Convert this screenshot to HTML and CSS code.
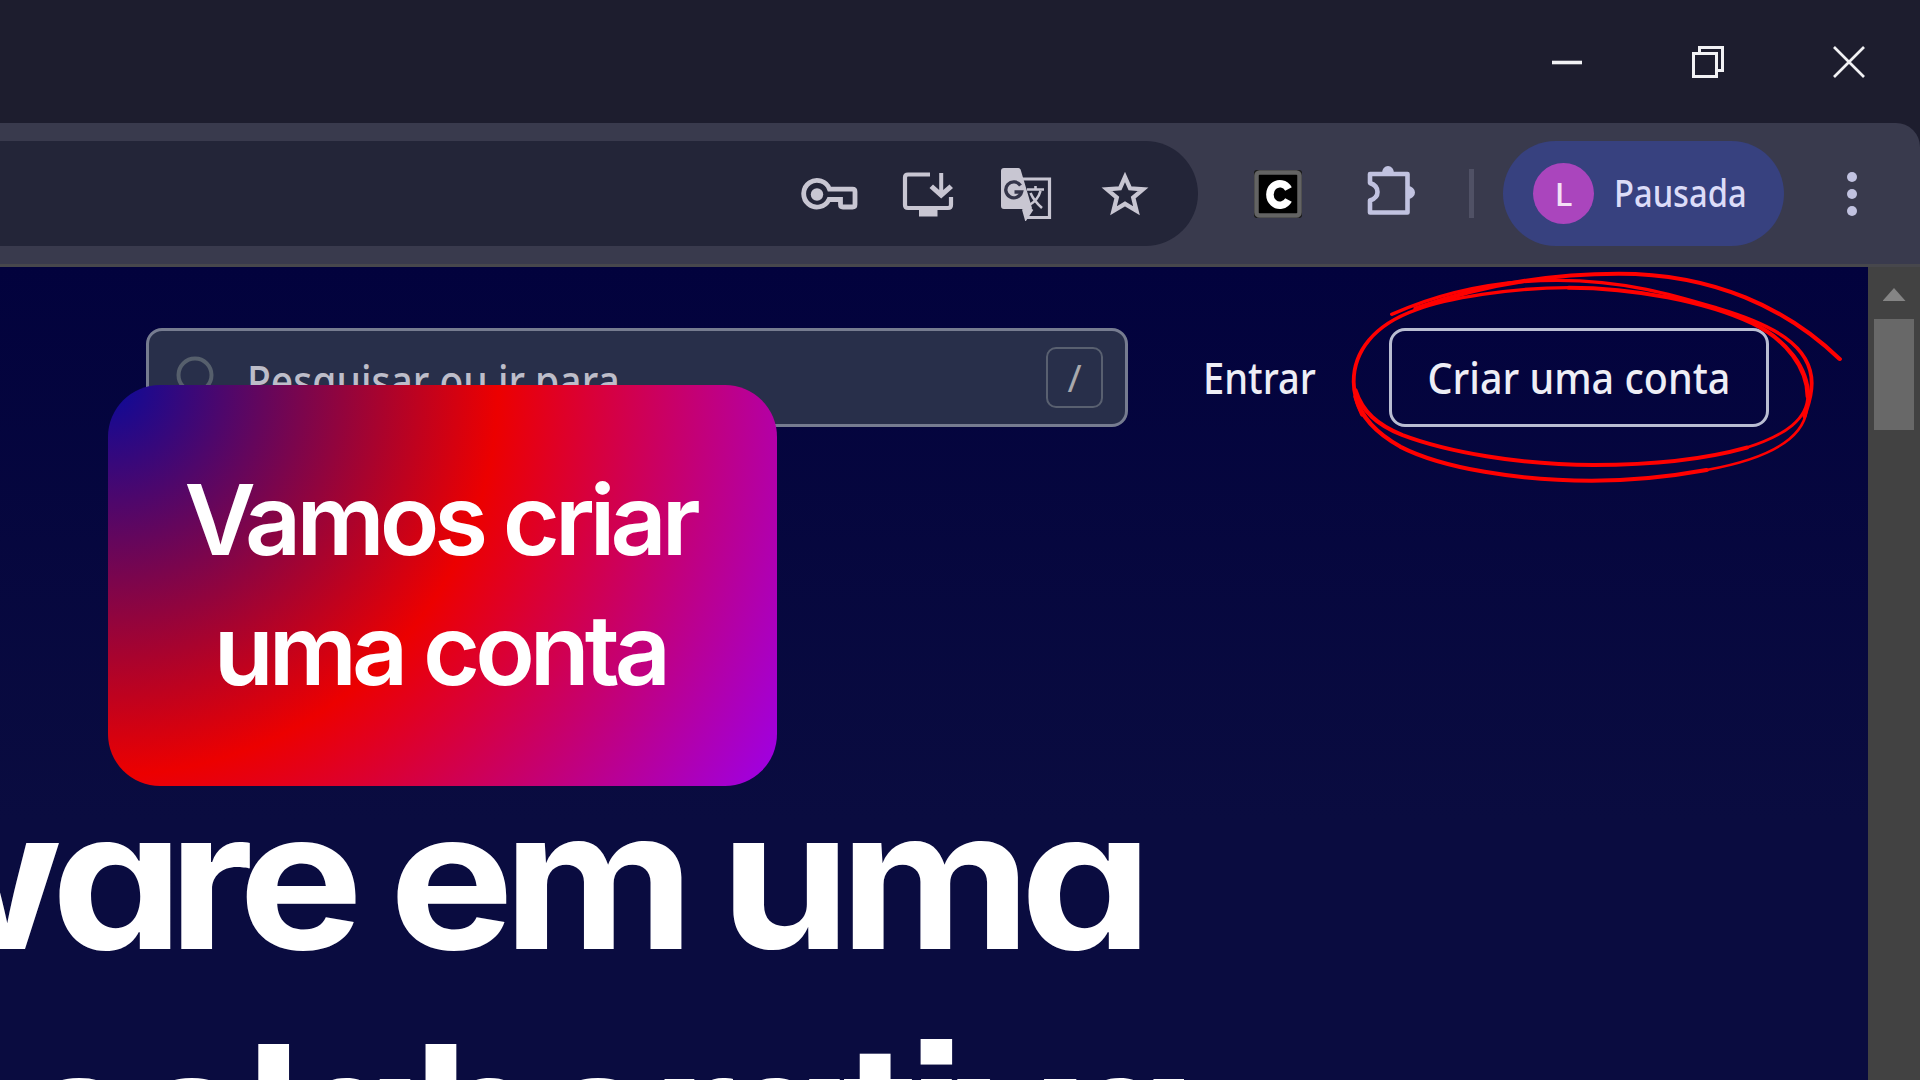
FILE: index.html
```html
<!DOCTYPE html>
<html lang="pt-BR">
<head>
<meta charset="utf-8">
<title>Criar uma conta</title>
<link rel="stylesheet" href="styles.css">
</head>
<body>
<div class="window">
  <header class="titlebar">
    <svg class="win-icon" viewBox="0 0 34 34"><path d="M2 17.5H32" stroke-width="3.6"/></svg>
    <svg class="win-icon" viewBox="0 0 34 34"><path d="M2.5 8.500H25.500V31.500H2.500ZM8.500 8V2.500H31.500V25.500H26" stroke-width="3"/></svg>
    <svg class="win-icon" viewBox="0 0 34 34"><path d="M2 2L32 32M32 2L2 32" stroke-width="2.700"/></svg>
  </header>

  <div class="toolbar">
    <div class="address">
      <svg class="ico key" viewBox="0 0 58 34"><g fill="none" stroke="currentColor" stroke-width="4.800"><path d="M28.500 12.200A13.300 13.300 0 1 0 28 22.500H39.500V27.500Q39.500 30 42 30H51.500Q54 30 54 27.500V14.700Q54 12.200 51.500 12.200Z"/></g><circle cx="16" cy="17.500" r="6.200" fill="currentColor"/></svg>
      <svg class="ico install" viewBox="0 0 52 46"><path d="M28 3.500H6Q3 3.500 3 6.500V34Q3 37 6 37H46Q49 37 49 34V26" fill="none" stroke="currentColor" stroke-width="4.200"/><path d="M17 37H35.500V45.500H17ZM37.200 2H41.200V19L47.500 13.500L51 17L39.200 27.500L27.500 17L31 13.500L37.200 19Z" fill="currentColor"/></svg>
      <svg class="ico translate" viewBox="0 0 54 54"><path d="M4 1H18.500Q20 1 20.600 2.500L32 41L26 52L23.500 42H4Q1 42 1 39V4Q1 1 4 1Z" fill="currentColor"/><path d="M22 12H49.500V50.500H27M23.500 42L26 51L32 42" fill="none" stroke="currentColor" stroke-width="3.200"/><path d="M20.500 18.500A8 8 0 1 0 21.500 25H14.500" fill="none" stroke="#34354a" stroke-width="3.400"/><path d="M27 22.500H44M35.500 19V23M40.500 24Q38 33 29.500 38M30.500 26Q34 34 42 41" fill="none" stroke="currentColor" stroke-width="2.600"/></svg>
      <svg class="ico star" viewBox="0 0 50 46"><path d="M25 6L30 17.300L43 18.300L33.200 26.500L36.500 39.800L25 32.800L13.500 39.800L16.800 26.500L7 18.300L20 17.300Z" fill="none" stroke="currentColor" stroke-width="4.300"/></svg>
    </div>
    <svg class="ext" viewBox="0 0 48 48"><rect width="48" height="48" rx="3" fill="#191919"/><rect x="2.500" y="2.500" width="43" height="43" rx="3" fill="#000" stroke="#636363" stroke-width="4.500"/><path d="M34.500 19A10 10.800 0 1 0 34.500 30" fill="none" stroke="#fff" stroke-width="7.500"/></svg>
    <svg class="puzzle" viewBox="0 0 52 52"><path d="M4 9H41.500V47.500H4V35.500Q11.500 33 11.500 27Q11.500 20.500 4 18Z" fill="none" stroke="#c1c2e0" stroke-width="4.600" stroke-linejoin="round"/><path d="M16 8A6 7 0 0 1 28 8ZM42 21A7 6.500 0 0 1 42 34Z" fill="#c1c2e0"/></svg>
    <span class="divider"></span>
    <div class="profile"><span class="avatar">L</span><span class="status">Pausada</span></div>
    <svg class="dots" viewBox="0 0 12 46"><circle cx="6" cy="6" r="5"/><circle cx="6" cy="23" r="5"/><circle cx="6" cy="40" r="5"/></svg>
  </div>

  <div class="viewport">
    <main class="page">
      <nav class="nav">
        <div class="search">
          <svg class="lens" viewBox="0 0 42 42"><circle cx="19" cy="19" r="16.500"/><path d="M31 31L40 40"/></svg>
          <span class="search-text">Pesquisar ou ir para...</span>
          <kbd class="slash">/</kbd>
        </div>
        <a class="signin">Entrar</a>
        <a class="signup"><span class="signup-text">Criar uma conta</span></a>
      </nav>
      <h1 class="hero"><span class="line one">w<span class="tight">ar</span>e em uma</span><span class="line two">colaborativa</span></h1>
    </main>
    <aside class="scrollbar"><span class="arrow"></span><span class="thumb"></span></aside>
  </div>
</div>

<div class="callout"><span>Vamos criar</span><span>uma conta</span></div>

<svg class="scribble" viewBox="0 0 1568 720" preserveAspectRatio="none">
  <path stroke-width="10" d="M188 178C330 105 480 76 620 76C800 76 930 122 1040 160C1180 208 1285 270 1285 385C1285 430 1272 460 1266 485"/>
  <path stroke-width="7" d="M1272 465C1260 570 1130 620 1010 645"/>
  <path stroke-width="12" d="M1010 645C900 668 800 677 710 677C520 677 320 640 210 575C140 530 105 480 93 425"/>
  <path stroke-width="10" d="M110 480C94 440 88 410 88 380C88 290 140 210 250 165C330 130 500 98 650 98"/>
  <path stroke-width="12" d="M250 160C410 95 590 56 780 56C1030 56 1220 160 1358 312"/>
  <path stroke-width="12" d="M650 98C820 98 1010 140 1130 205C1220 255 1275 340 1275 425"/>
  <path stroke-width="8" d="M1275 420C1275 490 1220 540 1110 580"/>
  <path stroke-width="12" d="M1115 578C1000 615 850 630 715 630C520 630 330 590 215 540C150 510 110 470 92 405"/>
</svg>
</body>
</html>
```
FILE: styles.css
```css
* { box-sizing: border-box; }
body {
  margin: 0;
  width: 1920px;
  height: 1080px;
  overflow: hidden;
  position: relative;
  background: #1d1d2e;
  font-family: "Noto Sans", "Open Sans", sans-serif;
}
.window { display: flex; flex-direction: column; height: 1080px; }
svg { display: block; flex: none; }

.titlebar {
  height: 123px;
  display: flex;
  justify-content: flex-end;
  align-items: center;
  gap: 107px;
  padding-right: 54px;
}
.win-icon { width: 34px; height: 34px; fill: none; stroke: #f1f1f4; }

.toolbar {
  height: 144px;
  display: flex;
  align-items: center;
  background: #393a4d;
  border-bottom: 3px solid #47474c;
  border-top-right-radius: 24px;
}
.address {
  width: 1198px;
  height: 105px;
  display: flex;
  justify-content: flex-end;
  align-items: center;
  background: #232538;
  border-radius: 0 53px 53px 0;
  padding-right: 48px;
  color: #c8c6d2;
}
.key { width: 58px; height: 34px; margin-right: 43px; }
.install { width: 52px; height: 46px; margin-right: 46px; }
.translate { width: 54px; height: 54px; margin-right: 46px; }
.star { width: 50px; height: 46px; }
.ext { width: 48px; height: 48px; margin-left: 56px; }
.puzzle { width: 52px; height: 52px; margin: -6px 51px 0 64px; }
.divider { width: 5px; height: 49px; background: #505165; margin-right: 29px; }
.profile {
  width: 281px;
  height: 105px;
  display: flex;
  align-items: center;
  background: #37417f;
  border-radius: 53px;
  padding-left: 30px;
  color: #dcdcf8;
}
.avatar {
  width: 61px;
  height: 61px;
  border-radius: 50%;
  background: #aa45bd;
  color: #f4e0f6;
  font-size: 33px;
  font-weight: 500;
  line-height: 61px;
  text-align: center;
}
.status {
  font-size: 38px;
  font-weight: 500;
  margin-left: 20px;
  padding-bottom: 3px;
  white-space: nowrap;
  transform: scaleX(0.86);
  transform-origin: left;
}
.dots { width: 12px; height: 46px; margin-left: 62px; fill: #c1c2e0; }

.viewport { flex: 1; display: grid; grid-template-columns: 1868px 52px; min-height: 0; }
.page { background: linear-gradient(#02023d, #0a0c40 68%); overflow: hidden; }
.nav {
  display: flex;
  align-items: center;
  padding: 61px 0 0 146px;
  height: 160px;
  color: #eeeef6;
  font-size: 43px;
}
.search {
  width: 982px;
  height: 99px;
  display: flex;
  align-items: center;
  background: #282f4a;
  border: 3px solid #767c90;
  border-radius: 16px;
  padding: 0 22px 0 27px;
}
.lens { width: 42px; height: 42px; margin-top: -2px; fill: none; stroke: #565f6c; stroke-width: 4; }
.search-text {
  margin-left: 29px;
  padding-top: 5px;
  flex: 1;
  color: #bdbdc9;
  font-weight: 500;
  white-space: nowrap;
  transform: scaleX(0.908);
  transform-origin: left;
}
.slash {
  width: 57px;
  height: 61px;
  border: 2px solid #596070;
  border-radius: 10px;
  color: #a9a9ad;
  font: 38px/57px "Noto Sans", sans-serif;
  text-align: center;
}
.signin {
  width: 112px;
  margin-left: 75px;
  white-space: nowrap;
  font-weight: 500;
  transform: scaleX(0.885);
  transform-origin: left;
}
.signup {
  width: 380px;
  height: 99px;
  margin-left: 74px;
  border: 3px solid #b9bdd2;
  border-radius: 16px;
  display: flex;
  align-items: center;
  justify-content: center;
  white-space: nowrap;
  font-weight: 500;
}
.signup-text { transform: scaleX(0.918); }
.hero {
  margin: 334px 0 0;
  color: #fff;
  font: 700 194px/236px Inter, sans-serif;
  font-feature-settings: "cv11", "ss07";
  letter-spacing: -10px;
  white-space: nowrap;
}
.line { display: block; transform: scaleX(1.08); transform-origin: left; }
.one { margin-left: -116px; word-spacing: -2px; }
.two { margin-left: 15px; }
.tight { letter-spacing: -14px; }
.scrollbar {
  background: #424242;
  display: flex;
  flex-direction: column;
  align-items: center;
  padding-top: 21px;
}
.arrow { width: 23px; height: 13px; background: #858585; clip-path: polygon(50% 0, 100% 100%, 0 100%); }
.thumb { width: 40px; height: 111px; margin-top: 18px; background: #686868; }

.callout {
  position: absolute;
  left: 108px;
  top: 385px;
  width: 669px;
  height: 401px;
  border-radius: 52px;
  background: radial-gradient(circle farthest-corner at 0 0, #0a0a9a, #ec0000 50%, #9d00e8);
  display: flex;
  flex-direction: column;
  align-items: center;
  padding: 70px 5px 0 0;
  color: #fff;
  font: 600 98px/130px Inter, sans-serif;
  letter-spacing: -5px;
  white-space: nowrap;
}
.scribble {
  position: absolute;
  left: 1320px;
  top: 255px;
  width: 600px;
  height: 240px;
  fill: none;
  stroke: #f00;
  stroke-linecap: round;
}
```
